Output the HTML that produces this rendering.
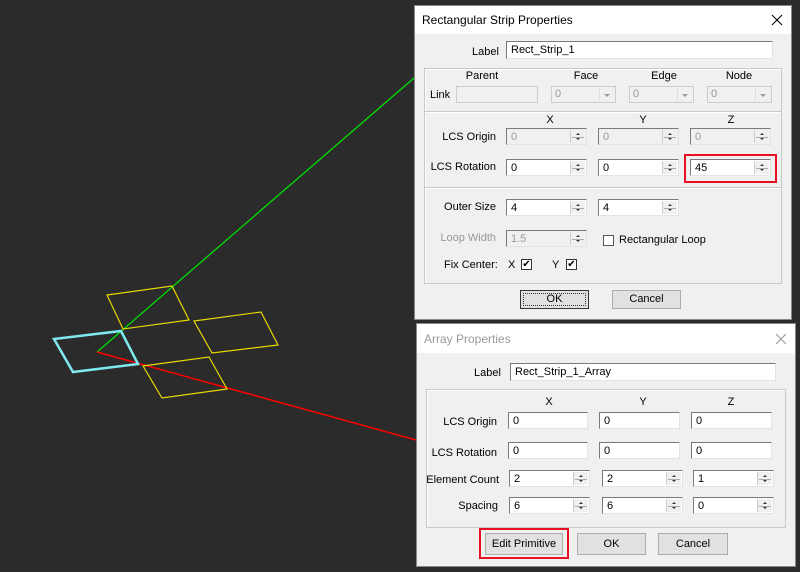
<!DOCTYPE html><html><head><style>
body{margin:0;width:800px;height:572px;background:#2b2b2b;position:relative;overflow:hidden;font-family:"Liberation Sans",sans-serif;font-size:11px;color:#000}
.a{position:absolute}
.dlg{position:absolute;background:#f0f0f0;border:1px solid #888}
.tb{position:absolute;left:0;right:0;top:0;background:#fff}
.t{position:absolute;white-space:nowrap;line-height:13px}
.r{text-align:right}
.c{text-align:center}
.in{position:absolute;background:#fff;border-top:1px solid #7a7a7a;border-left:1px solid #7a7a7a;border-right:1px solid #e3e3e3;border-bottom:1px solid #e3e3e3;box-sizing:border-box;padding-left:4px;padding-top:1px;line-height:15px}
.dis{background:#f0f0f0;color:#999}
.sp{position:absolute;right:1px;top:1px;bottom:1px;width:14px;background:#f0f0f0;border-left:1px solid #ccc}
.sp:before{content:"";position:absolute;left:5px;top:3px;border:2px solid transparent;border-bottom:2px solid #333;border-top:0}
.sp:after{content:"";position:absolute;left:5px;bottom:3px;border:2px solid transparent;border-top:2px solid #333;border-bottom:0}
.sp i{position:absolute;left:1px;right:1px;top:50%;border-top:1px solid #aaa}
.grp{position:absolute;border:1px solid #c8c8c8;box-shadow:inset 1px 1px 0 #fff}
.btn{position:absolute;background:#e1e1e1;border:1px solid #adadad;box-sizing:border-box;text-align:center;line-height:16px}
.cb{position:absolute;width:11px;height:11px;background:#fff;border:1px solid #333;box-sizing:border-box;font-size:10px;line-height:9px;text-align:center}
.cmb{position:absolute;background:#f0f0f0;border:1px solid #ccc;box-sizing:border-box;color:#999;padding-left:3px;line-height:15px}
.cmb b{position:absolute;right:1px;top:1px;bottom:1px;width:14px;border-left:1px solid #ddd}
.cmb b:after{content:"";position:absolute;left:4px;top:6px;border:3px solid transparent;border-top:3px solid #999}
.red{position:absolute;border:2px solid #e81123;box-sizing:border-box}
</style></head><body>
<svg class="a" style="left:0;top:0" width="800" height="572">
<line x1="97" y1="352" x2="414" y2="78" stroke="#00e000" stroke-width="1.3"/>
<line x1="97" y1="352" x2="416" y2="440" stroke="#ff0000" stroke-width="1.5"/>
<g fill="none" stroke="#e6d800" stroke-width="1.2">
<polygon points="107,295 172,286 189,320 123,329"/>
<polygon points="194,321 261,312 278,345 212,353"/>
<polygon points="143,366 209,357 227,389 162,398"/>
</g>
<polygon points="54,339 121,331 138,364 73,372" fill="none" stroke="#7fe8f0" stroke-width="2.5"/>
</svg>

<div class="dlg" style="left:414px;top:5px;width:376px;height:313px">
<div class="tb" style="height:28px"></div>
<div class="t" style="left:7px;top:8px;font-size:12px">Rectangular Strip Properties</div>
<svg class="a" style="left:356px;top:8px" width="12" height="12"><path d="M1 1L11 11M11 1L1 11" stroke="#000" stroke-width="1.1"/></svg>
</div>
<div class="t" style="left:472px;top:46px">Label</div>
<div class="in" style="left:506px;top:41px;width:267px;height:18px">Rect_Strip_1</div>
<div class="grp" style="left:424px;top:68px;width:356px;height:43px"></div>
<div class="t c" style="left:452px;top:70px;width:60px">Parent</div>
<div class="t c" style="left:556px;top:70px;width:60px">Face</div>
<div class="t c" style="left:634px;top:70px;width:60px">Edge</div>
<div class="t c" style="left:709px;top:70px;width:60px">Node</div>
<div class="t" style="left:430px;top:89px">Link</div>
<div class="in dis" style="left:456px;top:86px;width:82px;height:17px;border-color:#ccc"></div>
<div class="cmb" style="left:551px;top:86px;width:65px;height:17px">0<b></b></div>
<div class="cmb" style="left:629px;top:86px;width:65px;height:17px">0<b></b></div>
<div class="cmb" style="left:707px;top:86px;width:65px;height:17px">0<b></b></div>
<div class="grp" style="left:424px;top:111px;width:356px;height:75px"></div>
<div class="t c" style="left:520px;top:114px;width:60px">X</div>
<div class="t c" style="left:613px;top:114px;width:60px">Y</div>
<div class="t c" style="left:701px;top:114px;width:60px">Z</div>
<div class="t r" style="left:420px;top:131px;width:76px">LCS Origin</div>
<div class="in dis" style="left:506px;top:128px;width:81px;height:17px">0<span class="sp"><i></i></span></div>
<div class="in dis" style="left:598px;top:128px;width:81px;height:17px">0<span class="sp"><i></i></span></div>
<div class="in dis" style="left:690px;top:128px;width:81px;height:17px">0<span class="sp"><i></i></span></div>
<div class="t r" style="left:420px;top:161px;width:76px">LCS Rotation</div>
<div class="in" style="left:506px;top:159px;width:81px;height:17px">0<span class="sp"><i></i></span></div>
<div class="in" style="left:598px;top:159px;width:81px;height:17px">0<span class="sp"><i></i></span></div>
<div class="in" style="left:690px;top:159px;width:81px;height:17px">45<span class="sp"><i></i></span></div>
<div class="red" style="left:684px;top:154px;width:93px;height:29px"></div>
<div class="grp" style="left:424px;top:187px;width:356px;height:95px"></div>
<div class="t r" style="left:420px;top:201px;width:76px">Outer Size</div>
<div class="in" style="left:506px;top:199px;width:81px;height:17px">4<span class="sp"><i></i></span></div>
<div class="in" style="left:598px;top:199px;width:81px;height:17px">4<span class="sp"><i></i></span></div>
<div class="t r" style="left:420px;top:232px;width:76px;color:#999">Loop Width</div>
<div class="in dis" style="left:506px;top:230px;width:81px;height:17px">1.5<span class="sp"><i></i></span></div>
<div class="cb" style="left:603px;top:235px;border-color:#555"></div>
<div class="t" style="left:619px;top:234px">Rectangular Loop</div>
<div class="t" style="left:444px;top:259px">Fix Center:</div>
<div class="t" style="left:508px;top:259px">X</div>
<div class="cb" style="left:521px;top:259px">✔</div>
<div class="t" style="left:552px;top:259px">Y</div>
<div class="cb" style="left:566px;top:259px">✔</div>
<div class="btn" style="left:520px;top:290px;width:69px;height:19px;border:1px solid #333;outline:1px dotted #333;outline-offset:-4px">OK</div>
<div class="btn" style="left:612px;top:290px;width:69px;height:19px">Cancel</div>

<div class="dlg" style="left:416px;top:323px;width:378px;height:242px">
<div class="tb" style="height:29px"></div>
<div class="t" style="left:7px;top:9px;font-size:12px;color:#999">Array Properties</div>
<svg class="a" style="left:358px;top:9px" width="12" height="12"><path d="M1 1L11 11M11 1L1 11" stroke="#999" stroke-width="1.1"/></svg>
</div>
<div class="t" style="left:474px;top:367px">Label</div>
<div class="in" style="left:510px;top:363px;width:266px;height:18px">Rect_Strip_1_Array</div>
<div class="grp" style="left:426px;top:389px;width:358px;height:137px"></div>
<div class="t c" style="left:519px;top:396px;width:60px">X</div>
<div class="t c" style="left:613px;top:396px;width:60px">Y</div>
<div class="t c" style="left:701px;top:396px;width:60px">Z</div>
<div class="t r" style="left:420px;top:416px;width:77px">LCS Origin</div>
<div class="in" style="left:508px;top:412px;width:80px;height:17px">0</div>
<div class="in" style="left:599px;top:412px;width:81px;height:17px">0</div>
<div class="in" style="left:691px;top:412px;width:81px;height:17px">0</div>
<div class="t r" style="left:420px;top:447px;width:77px">LCS Rotation</div>
<div class="in" style="left:508px;top:442px;width:80px;height:17px">0</div>
<div class="in" style="left:599px;top:442px;width:81px;height:17px">0</div>
<div class="in" style="left:691px;top:442px;width:81px;height:17px">0</div>
<div class="t r" style="left:420px;top:474px;width:79px">Element Count</div>
<div class="in" style="left:509px;top:470px;width:81px;height:17px">2<span class="sp"><i></i></span></div>
<div class="in" style="left:602px;top:470px;width:81px;height:17px">2<span class="sp"><i></i></span></div>
<div class="in" style="left:693px;top:470px;width:81px;height:17px">1<span class="sp"><i></i></span></div>
<div class="t r" style="left:420px;top:500px;width:78px">Spacing</div>
<div class="in" style="left:509px;top:497px;width:81px;height:17px">6<span class="sp"><i></i></span></div>
<div class="in" style="left:602px;top:497px;width:81px;height:17px">6<span class="sp"><i></i></span></div>
<div class="in" style="left:693px;top:497px;width:81px;height:17px">0<span class="sp"><i></i></span></div>
<div class="btn" style="left:485px;top:533px;width:78px;height:22px;line-height:20px">Edit Primitive</div>
<div class="red" style="left:479px;top:528px;width:90px;height:31px"></div>
<div class="btn" style="left:577px;top:533px;width:69px;height:22px;line-height:20px">OK</div>
<div class="btn" style="left:658px;top:533px;width:70px;height:22px;line-height:20px">Cancel</div>
</body></html>
